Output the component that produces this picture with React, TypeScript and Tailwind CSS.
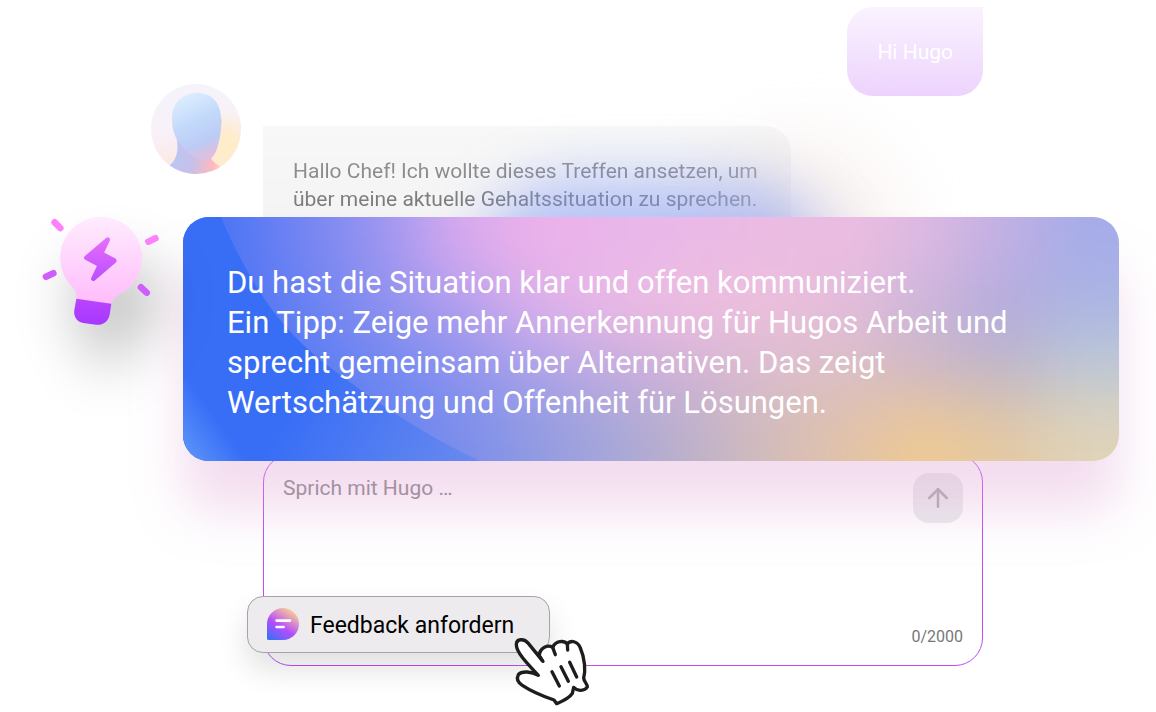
import React from "react";
import { ArrowUp } from "lucide-react";

// colour field behind the tip, one row per quarter of the card height
const mesh = [
  ["#4b74f5", "#7384f2", "#9a95f0", "#d6a9ee", "#ecb1ea", "#e9b6ea", "#eab9e7", "#ebbbe3", "#ecbde0", "#dcb9e2", "#c2b0e3", "#a6ace9"],
  ["#4b74f5", "#6580f3", "#8a8fef", "#ad9dee", "#dbb0ea", "#ebbae5", "#eebedf", "#edc0db", "#e2bcdb", "#cbb5d9", "#b2aadd", "#acb7e2"],
  ["#4b74f5", "#567af3", "#6f87f1", "#8b92ee", "#a9a1ea", "#c2abe0", "#d2b3d6", "#dabcd0", "#dabfc4", "#cfb9c4", "#c1b7c8", "#bfc9d4"],
  ["#4b74f5", "#4f77f4", "#6282f2", "#7a8dec", "#909ae2", "#a6a7d9", "#bdb1ca", "#d3bcba", "#e1c2a9", "#efca93", "#e3c8a3", "#e0d3b9"],
];

const cellWidth = 78;
const cellHeight = 61;

function TipBackground() {
  return (
    <svg
      className="absolute inset-0 h-full w-full"
      viewBox="0 0 936 244"
      preserveAspectRatio="none"
      aria-hidden="true"
    >
      <defs>
        <filter id="soften" x="-20%" y="-50%" width="140%" height="200%" colorInterpolationFilters="sRGB">
          <feGaussianBlur stdDeviation="32" />
        </filter>
        <linearGradient id="blue" x1="60" y1="120" x2="330" y2="270" gradientUnits="userSpaceOnUse">
          <stop offset="0.25" stopColor="#386ef6" />
          <stop offset="1" stopColor="#7590ec" />
        </linearGradient>
        <linearGradient id="corner" x1="0" y1="244" x2="42" y2="214" gradientUnits="userSpaceOnUse">
          <stop offset="0" stopColor="#5f98fa" />
          <stop offset="1" stopColor="#5f98fa" stopOpacity="0" />
        </linearGradient>
      </defs>
      <g filter="url(#soften)">
        {mesh.map((row, y) =>
          row.map((color, x) => {
            // the outer cells run past the card so that the blur has no pale rim
            const left = x === 0 ? -150 : x * cellWidth;
            const right = x === row.length - 1 ? 1090 : (x + 1) * cellWidth + 1;
            const top = y === 0 ? -120 : y * cellHeight;
            const bottom = y === mesh.length - 1 ? 370 : (y + 1) * cellHeight + 1;
            return (
              <rect key={`${x}-${y}`} x={left} y={top} width={right - left} height={bottom - top} fill={color} />
            );
          })
        )}
      </g>
      <path
        d="M0 0H38C52 34 70 66 87 90C110 121 134 142 160 160C200 190 245 220 297 244H0Z"
        fill="url(#blue)"
      />
      <rect width="120" height="244" fill="url(#corner)" />
    </svg>
  );
}

function Bulb() {
  return (
    <svg
      className="absolute -left-[141px] -top-px h-[110px] w-[118px] overflow-visible drop-shadow-[14px_42px_28px_rgba(0,0,0,0.24)]"
      viewBox="126 78 354 330"
      aria-hidden="true"
    >
      <defs>
        <linearGradient id="glass" x1="0" y1="0" x2="0" y2="1">
          <stop offset="0" stopColor="#ffecfe" />
          <stop offset="1" stopColor="#ffbcfb" />
        </linearGradient>
        <linearGradient id="bolt" x1="0" y1="0" x2="0" y2="1">
          <stop offset="0" stopColor="#e76cfb" />
          <stop offset="1" stopColor="#bb50ff" />
        </linearGradient>
        <linearGradient id="socket" x1="0" y1="0" x2="0" y2="1">
          <stop offset="0" stopColor="#b845ff" />
          <stop offset="1" stopColor="#a637ff" />
        </linearGradient>
      </defs>
      <path d="M228 330C231 312 227 301 216 290A123 123 0 1 1 355 315C345 320 338 330 334 345Z" fill="url(#glass)" />
      <path
        d="M229 326L334 341L329 374C325 395 308 406 288 404L250 399C231 395 220 380 223 360Z"
        fill="url(#socket)"
      />
      <path
        d="M323 149L259 203L300 225L280 266L343 212L303 191Z"
        fill="url(#bolt)"
        stroke="url(#bolt)"
        strokeWidth="14"
        strokeLinejoin="round"
      />
      <g strokeWidth="20" strokeLinecap="round">
        <path d="M164 97L181 114M445 155L466 145" stroke="#ff80fd" />
        <path d="M138 260L160 250M423 292L440 308" stroke="#cf5dfd" />
      </g>
    </svg>
  );
}

function Avatar() {
  return (
    <svg className="h-[90px] w-[90px] shrink-0" viewBox="0 0 90 90" role="img" aria-label="Hugo">
      <defs>
        <clipPath id="round">
          <circle cx="45" cy="45" r="45" />
        </clipPath>
        <linearGradient id="backdrop" x1="0.3" y1="0" x2="0.5" y2="1">
          <stop offset="0" stopColor="#f5f3fb" />
          <stop offset="0.5" stopColor="#f8f1f8" />
          <stop offset="1" stopColor="#ffe4dc" />
        </linearGradient>
        <radialGradient id="sun" cx="74" cy="62" r="36" gradientUnits="userSpaceOnUse">
          <stop offset="0.3" stopColor="#ffeccb" />
          <stop offset="1" stopColor="#ffeccb" stopOpacity="0" />
        </radialGradient>
        <linearGradient id="head" x1="0.35" y1="0" x2="0.7" y2="1">
          <stop offset="0" stopColor="#dcedfe" />
          <stop offset="0.4" stopColor="#c3dafb" />
          <stop offset="0.75" stopColor="#bccbf5" />
          <stop offset="1" stopColor="#e6bcd8" />
        </linearGradient>
        <linearGradient id="neck" x1="0" y1="0" x2="1" y2="0.1">
          <stop offset="0" stopColor="#b3cbf6" />
          <stop offset="0.5" stopColor="#c6c0ea" />
          <stop offset="0.85" stopColor="#ffb9bd" />
          <stop offset="1" stopColor="#ffd3c0" />
        </linearGradient>
        <filter id="edge">
          <feGaussianBlur stdDeviation="0.6" />
        </filter>
      </defs>
      <g clipPath="url(#round)">
        <rect width="90" height="90" fill="url(#backdrop)" />
        <rect width="90" height="90" fill="url(#sun)" />
        <g filter="url(#edge)">
          <path d="M24 46C28 62 28 74 18 82L14 92H76L70 83C65 80 62 78 60 74L50 58Z" fill="url(#neck)" />
          <path
            d="M46 9C31 9 21 19 21 35C21 50 27 60 36 67C44 73 52 77 58 75C66 73 70 52 70 35C70 18 60 9 46 9Z"
            fill="url(#head)"
          />
          <path d="M26 55C33 68 50 78 58 75C66 72 70 50 70 35" fill="none" stroke="#cfc6f6" strokeWidth="1" />
        </g>
      </g>
    </svg>
  );
}

function PointerHand() {
  return (
    <svg
      className="pointer-events-none absolute -bottom-[56px] -right-[42px] h-[72px] w-[78px]"
      viewBox="24 24 234 216"
      fill="none"
      stroke="#1d1d1b"
      strokeWidth="10"
      strokeLinecap="round"
      strokeLinejoin="round"
      aria-hidden="true"
    >
      <path
        d="M112 98L70 46C58 31 34 31 34 50C34 72 64 104 100 142C80 130 50 128 40 140C34 152 40 164 52 172C82 192 118 206 147 216L155 227C174 219 194 209 202 196L206 178C214 188 238 192 247 177C247 166 237 162 236 150C242 128 240 92 226 60C218 38 196 36 187 48C177 36 152 38 143 58C130 50 104 56 103 84Z"
        fill="#fff"
      />
      <path d="M103 84L114 100M143 58L151 80M187 48L188 66" />
      <path d="M141 131L163 174M168 116L190 160M194 103L215 147" />
    </svg>
  );
}

function FeedbackButton() {
  return (
    <button
      type="button"
      className="relative -ml-[17px] flex h-[57px] w-[303px] items-center gap-[11px] rounded-2xl border border-[#a5a3a6] bg-[#edebee] px-[19px] pb-px text-[23px] text-black shadow-[0_16px_30px_rgba(0,0,0,0.12)]"
    >
      <svg className="h-8 w-8 shrink-0" viewBox="0 0 32 32" aria-hidden="true">
        <defs>
          <linearGradient id="bubble" x1="0.1" y1="1" x2="0.75" y2="0">
            <stop offset="0" stopColor="#3a6ff8" />
            <stop offset="0.45" stopColor="#b64dfb" />
            <stop offset="0.95" stopColor="#f8ca98" />
          </linearGradient>
        </defs>
        <path d="M16 0A16 16 0 0 1 16 32H1.500A1.500 1.500 0 0 1 0 30.500V16A16 16 0 0 1 16 0Z" fill="url(#bubble)" />
        <path d="M9.600 12.600H23M9.600 19H16.600" stroke="#fff" strokeWidth="2.600" strokeLinecap="round" />
      </svg>
      <span className="whitespace-nowrap pt-1">Feedback anfordern</span>
      <PointerHand />
    </button>
  );
}

function Composer() {
  return (
    <form className="-mt-[7px] ml-28 flex min-h-[212px] flex-col justify-between rounded-[28px] border border-[#be4df8] pt-[18px] pr-[19px] pb-3">
      <div className="flex items-start justify-between">
        <textarea
          aria-label="Nachricht an Hugo"
          placeholder="Sprich mit Hugo …"
          rows={2}
          className="flex-1 resize-none bg-transparent pl-[19px] text-[21px] leading-[30px] text-[#333] outline-none placeholder:text-[#8c8a8c] placeholder:opacity-100"
        />
        <button
          type="button"
          aria-label="Senden"
          className="flex h-[50px] w-[50px] items-center justify-center rounded-2xl bg-[#ebebed] text-[#b0acb2]"
        >
          <ArrowUp className="h-[30px] w-[30px]" strokeWidth={2} />
        </button>
      </div>
      <div className="flex items-end justify-between">
        <FeedbackButton />
        <span className="pb-1 text-base text-[#777]">0/2000</span>
      </div>
    </form>
  );
}

function App() {
  return (
    <main className="flex min-h-screen flex-col overflow-hidden bg-white pt-[7px] pr-[173px] pl-[151px] font-['Roboto',sans-serif]">
      <div className="self-end rounded-[26px] rounded-tr-none bg-linear-to-b from-[#faf3fe] to-[#edd3fd] px-[30px] pt-[31px] pb-[30px] text-[21px] leading-7 text-white">
        Hi Hugo
      </div>
      <div className="-mt-3 flex items-start gap-[22px]">
        <Avatar />
        <p className="mt-[42px] max-w-[528px] flex-1 rounded-[26px] rounded-tl-none bg-[#eee] px-[30px] pt-[31px] pb-[30px] text-[21px] leading-7 text-[#2b2b2b] mask-[linear-gradient(rgba(0,0,0,0.42),rgba(0,0,0,0.72))]">
          Hallo Chef! Ich wollte dieses Treffen ansetzen, um über meine aktuelle
          Gehaltssituation zu sprechen.
        </p>
      </div>
      {/* tip card, lies over the chat */}
      <section className="relative z-10 -mt-[26px] -mr-[136px] ml-8">
        <div className="absolute -top-[70px] left-[530px] h-[180px] w-[180px] rounded-full bg-[#eeddd8]/50 blur-2xl"></div>
        <div className="absolute -top-[40px] left-[290px] h-[200px] w-[360px] rounded-full bg-[#7f97f8]/50 blur-[28px]"></div>
        <div className="relative overflow-hidden rounded-[26px] px-11 pt-[46px] pb-[38px] shadow-[0_50px_50px_rgba(223,160,211,0.36)]">
          <TipBackground />
          <p className="relative text-[31px] leading-10 text-white">
            Du hast die Situation klar und offen kommuniziert.
            <br />
            Ein Tipp: Zeige mehr Annerkennung für Hugos Arbeit und sprecht
            gemeinsam über Alternativen. Das zeigt Wertschätzung und Offenheit
            für Lösungen.
          </p>
        </div>
        <Bulb />
      </section>
      <Composer />
    </main>
  );
}

export default App;
